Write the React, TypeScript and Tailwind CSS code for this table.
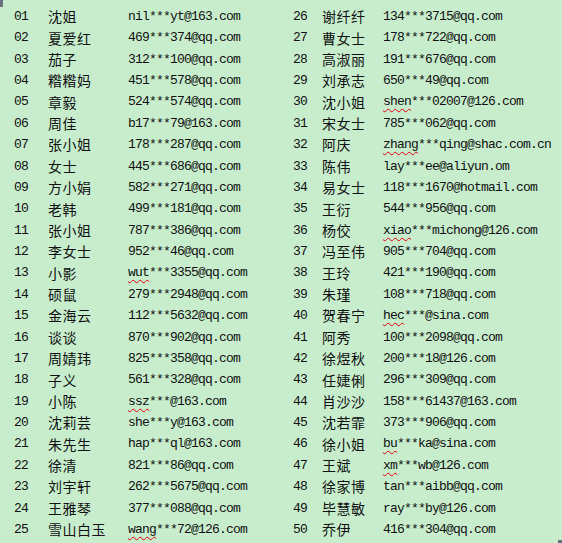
import React from 'react'

type Entry = {
  no: string
  name: string
  email: string
  typo?: boolean // spell-check squiggle under the part before ***
}

const left: Entry[] = [
  { no: '01', name: '沈姐', email: 'nil***yt@163.com' },
  { no: '02', name: '夏爱红', email: '469***374@qq.com' },
  { no: '03', name: '茄子', email: '312***100@qq.com' },
  { no: '04', name: '糌糌妈', email: '451***578@qq.com' },
  { no: '05', name: '章毅', email: '524***574@qq.com' },
  { no: '06', name: '周佳', email: 'b17***79@163.com' },
  { no: '07', name: '张小姐', email: '178***287@qq.com' },
  { no: '08', name: '女士', email: '445***686@qq.com' },
  { no: '09', name: '方小娟', email: '582***271@qq.com' },
  { no: '10', name: '老韩', email: '499***181@qq.com' },
  { no: '11', name: '张小姐', email: '787***386@qq.com' },
  { no: '12', name: '李女士', email: '952***46@qq.com' },
  { no: '13', name: '小影', email: 'wut***3355@qq.com', typo: true },
  { no: '14', name: '硕鼠', email: '279***2948@qq.com' },
  { no: '15', name: '金海云', email: '112***5632@qq.com' },
  { no: '16', name: '谈谈', email: '870***902@qq.com' },
  { no: '17', name: '周婧玮', email: '825***358@qq.com' },
  { no: '18', name: '子义', email: '561***328@qq.com' },
  { no: '19', name: '小陈', email: 'ssz***@163.com', typo: true },
  { no: '20', name: '沈莉芸', email: 'she***y@163.com' },
  { no: '21', name: '朱先生', email: 'hap***ql@163.com' },
  { no: '22', name: '徐清', email: '821***86@qq.com' },
  { no: '23', name: '刘宇轩', email: '262***5675@qq.com' },
  { no: '24', name: '王雅琴', email: '377***088@qq.com' },
  { no: '25', name: '雪山白玉', email: 'wang***72@126.com', typo: true },
]

const right: Entry[] = [
  { no: '26', name: '谢纤纤', email: '134***3715@qq.com' },
  { no: '27', name: '曹女士', email: '178***722@qq.com' },
  { no: '28', name: '高淑丽', email: '191***676@qq.com' },
  { no: '29', name: '刘承志', email: '650***49@qq.com' },
  { no: '30', name: '沈小姐', email: 'shen***02007@126.com', typo: true },
  { no: '31', name: '宋女士', email: '785***062@qq.com' },
  { no: '32', name: '阿庆', email: 'zhang***qing@shac.com.cn', typo: true },
  { no: '33', name: '陈伟', email: 'lay***ee@aliyun.om' },
  { no: '34', name: '易女士', email: '118***1670@hotmail.com' },
  { no: '35', name: '王衍', email: '544***956@qq.com' },
  { no: '36', name: '杨佼', email: 'xiao***michong@126.com', typo: true },
  { no: '37', name: '冯至伟', email: '905***704@qq.com' },
  { no: '38', name: '王玲', email: '421***190@qq.com' },
  { no: '39', name: '朱瑾', email: '108***718@qq.com' },
  { no: '40', name: '贺春宁', email: 'hec***@sina.com', typo: true },
  { no: '41', name: '阿秀', email: '100***2098@qq.com' },
  { no: '42', name: '徐煜秋', email: '200***18@126.com' },
  { no: '43', name: '任婕俐', email: '296***309@qq.com' },
  { no: '44', name: '肖沙沙', email: '158***61437@163.com' },
  { no: '45', name: '沈若霏', email: '373***906@qq.com' },
  { no: '46', name: '徐小姐', email: 'bu***ka@sina.com', typo: true },
  { no: '47', name: '王斌', email: 'xm***wb@126.com', typo: true },
  { no: '48', name: '徐家博', email: 'tan***aibb@qq.com' },
  { no: '49', name: '毕慧敏', email: 'ray***by@126.com' },
  { no: '50', name: '乔伊', email: '416***304@qq.com' },
]

const mono = "font-['Liberation_Mono','DejaVu_Sans_Mono',monospace] text-[13px] tracking-[-0.8px]"
const cjk = "font-['Noto_Sans_CJK_SC','Noto_Sans_CJK_TC',sans-serif] text-[14px] tracking-[0.5px]"

function Email({ entry }: { entry: Entry }) {
  if (!entry.typo) return <span>{entry.email}</span>
  const i = entry.email.indexOf('***')
  return (
    <span>
      <span className="underline decoration-wavy decoration-red-600 decoration-1 underline-offset-[3px]">
        {entry.email.slice(0, i)}
      </span>
      {entry.email.slice(i)}
    </span>
  )
}

export default function App() {
  return (
    <div className="relative h-[543px] w-[562px] overflow-hidden bg-[#c7edcc] text-[#111]">
      <div className="absolute left-0 top-0 h-[7px] w-[3px] bg-gray-500" />
      <div className="absolute bottom-0 right-0 h-[3px] w-[4px] bg-gray-500" />
      <div className="grid grid-cols-[34px_80px_165px_29px_61px_1fr] pl-[14px] pt-[6px]">
        {left.map((l, i) => {
          const r = right[i]
          return (
            <React.Fragment key={l.no}>
              <div className={`flex h-[21.375px] items-center ${mono}`}>{l.no}</div>
              <div className={`flex h-[21.375px] items-center ${cjk}`}>{l.name}</div>
              <div className={`flex h-[21.375px] items-center whitespace-nowrap ${mono}`}>
                <Email entry={l} />
              </div>
              <div className={`flex h-[21.375px] items-center ${mono}`}>{r.no}</div>
              <div className={`flex h-[21.375px] items-center whitespace-nowrap ${cjk}`}>{r.name}</div>
              <div className={`flex h-[21.375px] items-center whitespace-nowrap ${mono}`}>
                <Email entry={r} />
              </div>
            </React.Fragment>
          )
        })}
      </div>
    </div>
  )
}
